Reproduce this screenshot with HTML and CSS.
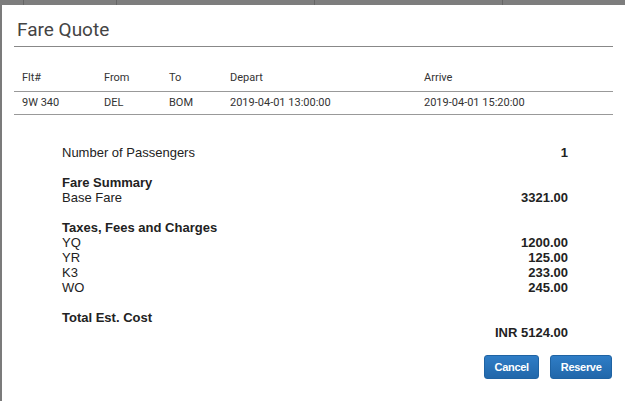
FILE: index.html
```html
<!DOCTYPE html>
<html>
<head>
<meta charset="utf-8">
<link rel="stylesheet" href="styles.css">
</head>
<body>
<div class="topbar">
  <span class="tick t1"></span><span class="tick t2"></span><span class="tick t3"></span><span class="tick t4"></span>
</div>
<div class="modal">
  <h1 class="title">Fare Quote</h1>
  <div class="flights">
    <div class="frow fhead">
      <span>Flt#</span><span>From</span><span>To</span><span>Depart</span><span>Arrive</span>
    </div>
    <div class="frow fbody">
      <span>9W 340</span><span>DEL</span><span>BOM</span><span>2019-04-01 13:00:00</span><span>2019-04-01 15:20:00</span>
    </div>
  </div>
  <div class="summary">
    <div class="line"><span>Number of Passengers</span><b>1</b></div>
    <div class="gap"></div>
    <div class="line"><b>Fare Summary</b></div>
    <div class="line"><span>Base Fare</span><b>3321.00</b></div>
    <div class="gap"></div>
    <div class="line"><b>Taxes, Fees and Charges</b></div>
    <div class="line"><span>YQ</span><b>1200.00</b></div>
    <div class="line"><span>YR</span><b>125.00</b></div>
    <div class="line"><span>K3</span><b>233.00</b></div>
    <div class="line"><span>WO</span><b>245.00</b></div>
    <div class="gap"></div>
    <div class="line"><b>Total Est. Cost</b></div>
    <div class="line end"><b>INR 5124.00</b></div>
  </div>
  <div class="actions">
    <button class="btn">Cancel</button>
    <button class="btn">Reserve</button>
  </div>
</div>
</body>
</html>
```
FILE: styles.css
```css
html, body {
  margin: 0;
  padding: 0;
  height: 100%;
}
body {
  background: #7b7b7b;
  font-family: "Liberation Sans", Arial, sans-serif;
  color: #333;
  overflow: hidden;
}
.topbar {
  position: relative;
  height: 5px;
  background: #7d7d7d;
}
.tick {
  position: absolute;
  top: 0;
  width: 1px;
  height: 5px;
  background: #666;
}
.t1 { left: 23px; }
.t2 { left: 116px; }
.t3 { left: 314px; }
.t4 { left: 502px; }
.modal {
  margin-left: 2px;
  background: #fff;
  height: 396px;
  padding: 0 12px 0 12px;
  box-sizing: border-box;
}
.title {
  margin: 0;
  padding: 15px 0 6px 3px;
  font-family: Roboto, "Liberation Sans", sans-serif;
  font-weight: 400;
  font-size: 19px;
  line-height: 20px;
  color: #444;
  border-bottom: 1px solid #888;
}
.flights {
  margin-top: 18px;
  font-family: Roboto, "Liberation Sans", sans-serif;
  font-size: 11px;
  color: #333;
}
.frow {
  display: grid;
  grid-template-columns: 82px 65px 61px 194px 1fr;
  padding-left: 8px;
  border-bottom: 1px solid #999;
}
.fhead {
  height: 26px;
  line-height: 25px;
}
.fbody {
  height: 22px;
  line-height: 22px;
}
.summary {
  margin: 30px 45px 0 48px;
  font-size: 13px;
  line-height: 15px;
  color: #222;
}
.line {
  display: flex;
  justify-content: space-between;
}
.line b { font-weight: 700; }
.end { justify-content: flex-end; }
.gap { height: 15px; }
.actions {
  display: flex;
  justify-content: flex-end;
  gap: 11px;
  margin-top: 15px;
  padding-right: 1px;
}
.btn {
  height: 24px;
  padding: 0 9.5px;
  border: 1px solid #1f63a3;
  border-radius: 3px;
  background: linear-gradient(#2f7dc6, #2167aa);
  color: #fff;
  font-family: "Liberation Sans", Arial, sans-serif;
  font-weight: 700;
  font-size: 11px;
  letter-spacing: -0.3px;
}
```
